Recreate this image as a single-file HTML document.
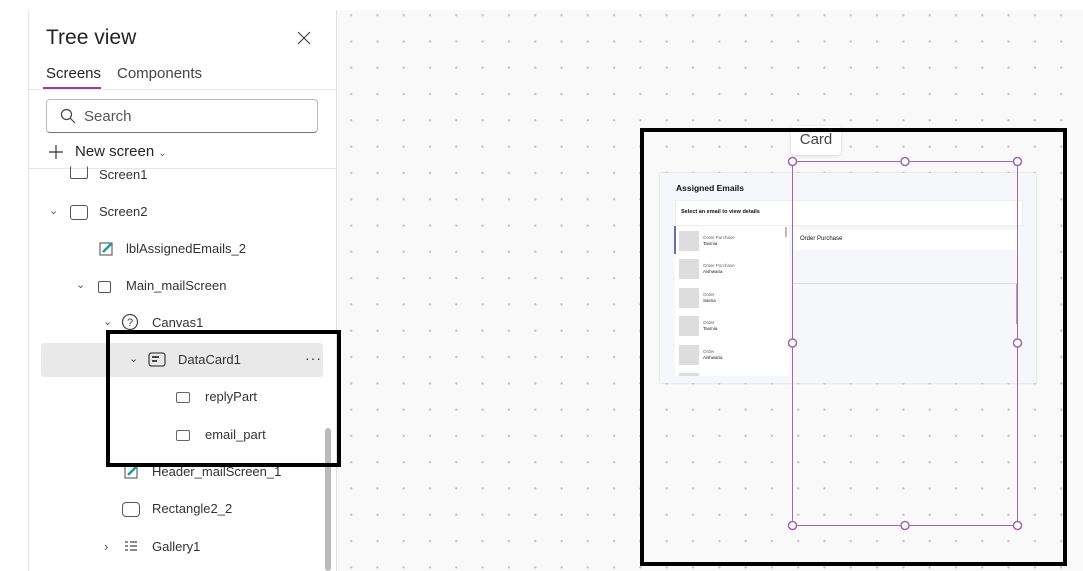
<!DOCTYPE html>
<html><head><style>
*{margin:0;padding:0;box-sizing:border-box}
body{width:1083px;height:571px;overflow:hidden;background:#fff;font-family:"Liberation Sans",sans-serif;position:relative;color:#242424}
.a{position:absolute}
.canvas{left:337px;top:10px;width:746px;height:561px;background-color:#f9f9f9;background-image:radial-gradient(circle,#c4c4c4 1px,transparent 1.4px);background-size:26.3px 26.3px;background-position:1px -8px}
.panel{left:28px;top:10px;width:309px;height:561px;background:#fff;border-left:1px solid #e6e6e6;border-right:1px solid #e0e0e0}
.row{position:absolute;font-size:13px;color:#333;height:20px;line-height:20px;white-space:nowrap}
.box{display:inline-block;border:1.3px solid #555;border-radius:2px;vertical-align:middle}
.chev{position:absolute;font-size:11px;color:#555}
</style></head><body>
<div class="a canvas"></div>
<div class="a panel"></div>
<div class="a" style="left:46px;top:26px;font-size:21px;color:#242424">Tree view</div>
<svg class="a" style="left:297px;top:31px" width="14" height="14"><path d="M1 1L13 13M13 1L1 13" stroke="#444" stroke-width="1.2"/></svg>
<div class="a" style="left:46px;top:65px;font-size:15px;color:#242424">Screens</div>
<div class="a" style="left:117px;top:65px;font-size:15px;color:#444">Components</div>
<div class="a" style="left:43px;top:87px;width:58px;height:2px;background:#9b3d9b"></div>
<div class="a" style="left:28px;top:89px;width:308px;height:1px;background:#e6e6e6"></div>
<div class="a" style="left:46px;top:99px;width:272px;height:34px;border:1px solid #bbb;border-bottom-color:#777;border-radius:4px"></div>
<svg class="a" style="left:60px;top:108px" width="16" height="16"><circle cx="6.5" cy="6.5" r="5" fill="none" stroke="#444" stroke-width="1.2"/><path d="M10 10L15 15" stroke="#444" stroke-width="1.2"/></svg>
<div class="a" style="left:84px;top:108px;font-size:15px;color:#555">Search</div>
<svg class="a" style="left:48px;top:144px" width="16" height="16"><path d="M8 1V15M1 8H15" stroke="#333" stroke-width="1.2"/></svg>
<div class="a" style="left:75px;top:143px;font-size:15px;color:#242424">New screen <span style="font-size:10px;color:#666">&#8964;</span></div>
<div class="a" style="left:28px;top:168px;width:308px;height:1px;background:#e6e6e6"></div>

<div class="a" style="left:41px;top:343px;width:282px;height:34px;background:#e9e9e9;border-radius:3px"></div>

<div class="row" style="left:70px;top:165px"><span class="box" style="width:18px;height:13px;border-top:none;margin-top:-6px"></span><span style="margin-left:11px">Screen1</span></div>
<div class="chev" style="left:49px;top:204px">&#8964;</div>
<div class="row" style="left:70px;top:202px"><span class="box" style="width:18px;height:15px;border-radius:3px"></span><span style="margin-left:11px">Screen2</span></div>
<svg class="a" style="left:99px;top:241px" width="15" height="15"><rect x="1" y="2" width="12" height="12" fill="none" stroke="#666" stroke-width="1.2"/><path d="M4 11L13 2" stroke="#1a9b9b" stroke-width="2.5"/></svg>
<div class="row" style="left:126px;top:239px">lblAssignedEmails_2</div>
<div class="chev" style="left:76px;top:278px">&#8964;</div>
<div class="row" style="left:98px;top:276px"><span class="box" style="width:13px;height:12px"></span><span style="margin-left:15px">Main_mailScreen</span></div>
<div class="chev" style="left:103px;top:315px">&#8964;</div>
<svg class="a" style="left:121px;top:313px" width="18" height="18"><circle cx="9" cy="9" r="7.5" fill="none" stroke="#444" stroke-width="1.2"/><text x="9" y="13" font-size="11" text-anchor="middle" fill="#444" font-family="Liberation Sans">?</text></svg>
<div class="row" style="left:152px;top:313px">Canvas1</div>
<div class="chev" style="left:129px;top:352px">&#8964;</div>
<svg class="a" style="left:148px;top:352px" width="18" height="15"><rect x="1" y="1" width="16" height="13" rx="2.5" fill="none" stroke="#444" stroke-width="1.3"/><path d="M4 5H11M4 9H9" stroke="#444" stroke-width="2"/></svg>
<div class="row" style="left:178px;top:350px">DataCard1</div>
<div class="row" style="left:305px;top:348px;font-size:14px;letter-spacing:1px">&middot;&middot;&middot;</div>
<div class="row" style="left:176px;top:387px"><span class="box" style="width:14px;height:11px;border-color:#666"></span><span style="margin-left:15px">replyPart</span></div>
<div class="row" style="left:176px;top:425px"><span class="box" style="width:14px;height:11px;border-color:#666"></span><span style="margin-left:15px">email_part</span></div>
<svg class="a" style="left:124px;top:464px" width="15" height="15"><rect x="1" y="2" width="12" height="12" fill="none" stroke="#666" stroke-width="1.2"/><path d="M4 11L13 2" stroke="#1a9b9b" stroke-width="2.5"/></svg>
<div class="row" style="left:152px;top:462px">Header_mailScreen_1</div>
<div class="row" style="left:122px;top:499px"><span class="box" style="width:18px;height:15px;border-radius:4px"></span><span style="margin-left:12px">Rectangle2_2</span></div>
<div class="chev" style="left:104px;top:539px;font-size:13px">&#8250;</div>
<svg class="a" style="left:124px;top:540px" width="14" height="12"><path d="M1 2H4M1 6H4M1 10H4M6 2H13M6 6H13M6 10H13" stroke="#444" stroke-width="1.3"/></svg>
<div class="row" style="left:152px;top:537px">Gallery1</div>
<div class="a" style="left:325px;top:428px;width:6px;height:143px;background:#bbb;border-radius:3px"></div>
<div class="a" style="left:106px;top:330px;width:235px;height:137px;border:4px solid #000"></div>

<div class="a" style="left:660px;top:173px;width:376px;height:210px;background:#f6f7fa;box-shadow:0 0 2px #ccc"></div>
<div class="a" style="left:676px;top:183px;font-size:8.5px;font-weight:bold;color:#111">Assigned Emails</div>
<div class="a" style="left:675px;top:200px;width:348px;height:26px;background:#fff;border:1px solid #eee"></div>
<div class="a" style="left:681px;top:209px;font-size:5.5px;font-weight:bold;color:#111">Select an email to view details</div>
<div class="a" style="left:675px;top:226px;width:114px;height:150px;background:#fff"></div>
<div class="a" style="left:674px;top:226px;width:2px;height:28px;background:#6b6fa8"></div>
<div class="a" style="left:785px;top:227px;width:2px;height:10px;background:#bbb"></div>
<div class="a" style="left:792px;top:230px;width:227px;height:20px;background:#fff"></div>
<div class="a" style="left:800px;top:236px;font-size:6px;color:#111">Order Purchase</div>
<div class="a" style="left:792px;top:283px;width:227px;height:1px;background:#ddd"></div>
<div class="a" style="left:1016px;top:284px;width:2px;height:40px;background:#aaa"></div>
<div class="a" style="left:679px;top:231px;width:20px;height:20px;background:#ddd"></div>
<div class="a" style="left:679px;top:259px;width:20px;height:20px;background:#ddd"></div>
<div class="a" style="left:679px;top:288px;width:20px;height:20px;background:#ddd"></div>
<div class="a" style="left:679px;top:316px;width:20px;height:20px;background:#ddd"></div>
<div class="a" style="left:679px;top:345px;width:20px;height:20px;background:#ddd"></div>
<div class="a" style="left:679px;top:373px;width:20px;height:3px;background:#ddd"></div>
<div class="a" style="left:703px;top:235px;font-size:4.5px;color:#666;line-height:6px">Order Purchase<br><span style="color:#222">Taxmia</span></div>
<div class="a" style="left:703px;top:263px;font-size:4.5px;color:#666;line-height:6px">Order Purchase<br><span style="color:#222">Aishwaria</span></div>
<div class="a" style="left:703px;top:292px;font-size:4.5px;color:#666;line-height:6px">Order<br><span style="color:#222">Saima</span></div>
<div class="a" style="left:703px;top:320px;font-size:4.5px;color:#666;line-height:6px">Order<br><span style="color:#222">Taxmia</span></div>
<div class="a" style="left:703px;top:349px;font-size:4.5px;color:#666;line-height:6px">Order<br><span style="color:#222">Aishwaria</span></div>

<div class="a" style="left:792px;top:161px;width:226px;height:365px;border:1.5px solid #a166ab"></div>
<svg class="a" style="left:780px;top:150px" width="250" height="390">
<g fill="#fff" stroke="#a166ab" stroke-width="1.5">
<circle cx="12.5" cy="11.5" r="4"/><circle cx="125" cy="11.5" r="4"/><circle cx="237.5" cy="11.5" r="4"/>
<circle cx="12.5" cy="193" r="4"/><circle cx="237.5" cy="193" r="4"/>
<circle cx="12.5" cy="375.5" r="4"/><circle cx="125" cy="375.5" r="4"/><circle cx="237.5" cy="375.5" r="4"/>
</g></svg>
<div class="a" style="left:791px;top:126px;width:50px;height:29px;background:#fff;border-radius:4px;box-shadow:0 1px 3px rgba(0,0,0,.15);font-size:15px;color:#444;text-align:center;line-height:28px">Card</div>
<div class="a" style="left:640px;top:128px;width:427px;height:438px;border:4px solid #000"></div>
</body></html>
